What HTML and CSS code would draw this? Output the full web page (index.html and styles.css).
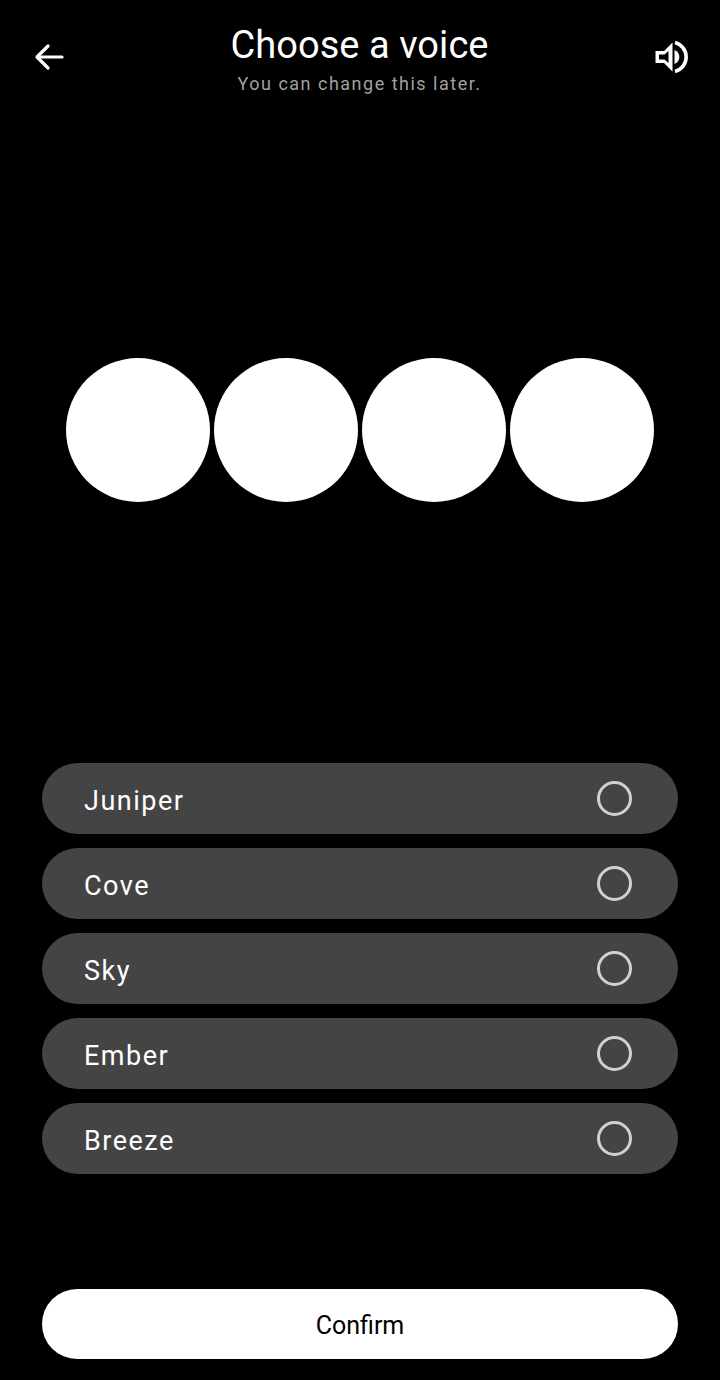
FILE: index.html
```html
<!DOCTYPE html>
<html lang="en">
<head>
    <meta charset="UTF-8">
    <meta name="viewport" content="width=device-width, initial-scale=1.0">
    <title>Choose a voice</title>
    <link rel="stylesheet" href="styles.css">
</head>
<body>
    <div class="screen">
        <!-- Header -->
        <header class="header">
            <button class="icon-btn" aria-label="Back">
                <svg width="32" height="32" viewBox="0 0 32 32" fill="none" stroke="#fff" stroke-width="3.200" stroke-linecap="round" stroke-linejoin="round">
                    <path d="M29 16H4.500"/>
                    <path d="M15 5L4 16l11 11"/>
                </svg>
            </button>
            <div class="titles">
                <h1 class="title">Choose a voice</h1>
                <p class="subtitle">You can change this later.</p>
            </div>
            <button class="icon-btn" aria-label="Sound">
                <svg width="36" height="36" viewBox="0 0 36 36">
                    <path fill="#fff" fill-rule="evenodd" d="M1.500 12H10l8.500-8.500v29L10 24H1.500zM5 15.500v5h5.500l4 3.500V12l-4 3.500z"/>
                    <path fill="#fff" d="M20.500 11a7.500 7.500 0 0 1 0 14z"/>
                    <path fill="none" stroke="#fff" stroke-width="3.600" d="M21 3.500a15 15 0 0 1 0 29"/>
                </svg>
            </button>
        </header>

        <!-- Voice orbs -->
        <div class="orbs">
            <div class="orb"></div>
            <div class="orb"></div>
            <div class="orb"></div>
            <div class="orb"></div>
        </div>

        <!-- Voice list -->
        <div class="voices">
            <label class="voice"><span class="voice-name">Juniper</span><span class="radio"></span></label>
            <label class="voice"><span class="voice-name">Cove</span><span class="radio"></span></label>
            <label class="voice"><span class="voice-name">Sky</span><span class="radio"></span></label>
            <label class="voice"><span class="voice-name">Ember</span><span class="radio"></span></label>
            <label class="voice"><span class="voice-name">Breeze</span><span class="radio"></span></label>
        </div>

        <button class="confirm">Confirm</button>
    </div>
</body>
</html>
```

FILE: styles.css
```css
body {
    margin: 0;
    background-color: #000;
    color: #fff;
    font-family: Roboto, Arial, sans-serif;
}
.screen {
    height: 1380px;
    display: flex;
    flex-direction: column;
    overflow: hidden;
}
.header {
    display: flex;
    justify-content: space-between;
    align-items: center;
    height: 76px;
    margin-top: 19px;
    padding: 0 30px 0 33px;
}
.icon-btn {
    display: flex;
    padding: 0;
    border: 0;
    background: none;
}
.titles {
    padding-top: 3px;
    text-align: center;
}
.title {
    margin: 0;
    font-size: 38px;
    font-weight: 400;
    line-height: 48px;
    letter-spacing: 0.05px;
}
.subtitle {
    margin: 3px 0 0;
    font-size: 18px;
    line-height: 24px;
    letter-spacing: 1.5px;
    color: #a0a0a0;
}
.orbs {
    display: flex;
    justify-content: center;
    gap: 4px;
    margin-top: 263px;
}
.orb {
    width: 144px;
    height: 144px;
    border-radius: 50%;
    background-color: #fff;
}
.voices {
    display: flex;
    flex-direction: column;
    gap: 14px;
    margin: 261px 42px 0;
}
.voice {
    display: flex;
    justify-content: space-between;
    align-items: center;
    height: 71px;
    padding: 0 46px 0 42px;
    border-radius: 36px;
    background-color: #444;
}
.voice-name {
    margin-top: 4px;
    font-size: 27px;
    letter-spacing: 1.5px;
}
.radio {
    box-sizing: border-box;
    width: 35px;
    height: 35px;
    margin-top: -1px;
    border: 3.5px solid #d0d0d6;
    border-radius: 50%;
}
.confirm {
    height: 70px;
    margin: 115px 42px 0;
    padding-top: 3px;
    border: 0;
    border-radius: 35px;
    background-color: #fff;
    color: #000;
    font-family: Roboto, Arial, sans-serif;
    font-size: 25px;
}
```
